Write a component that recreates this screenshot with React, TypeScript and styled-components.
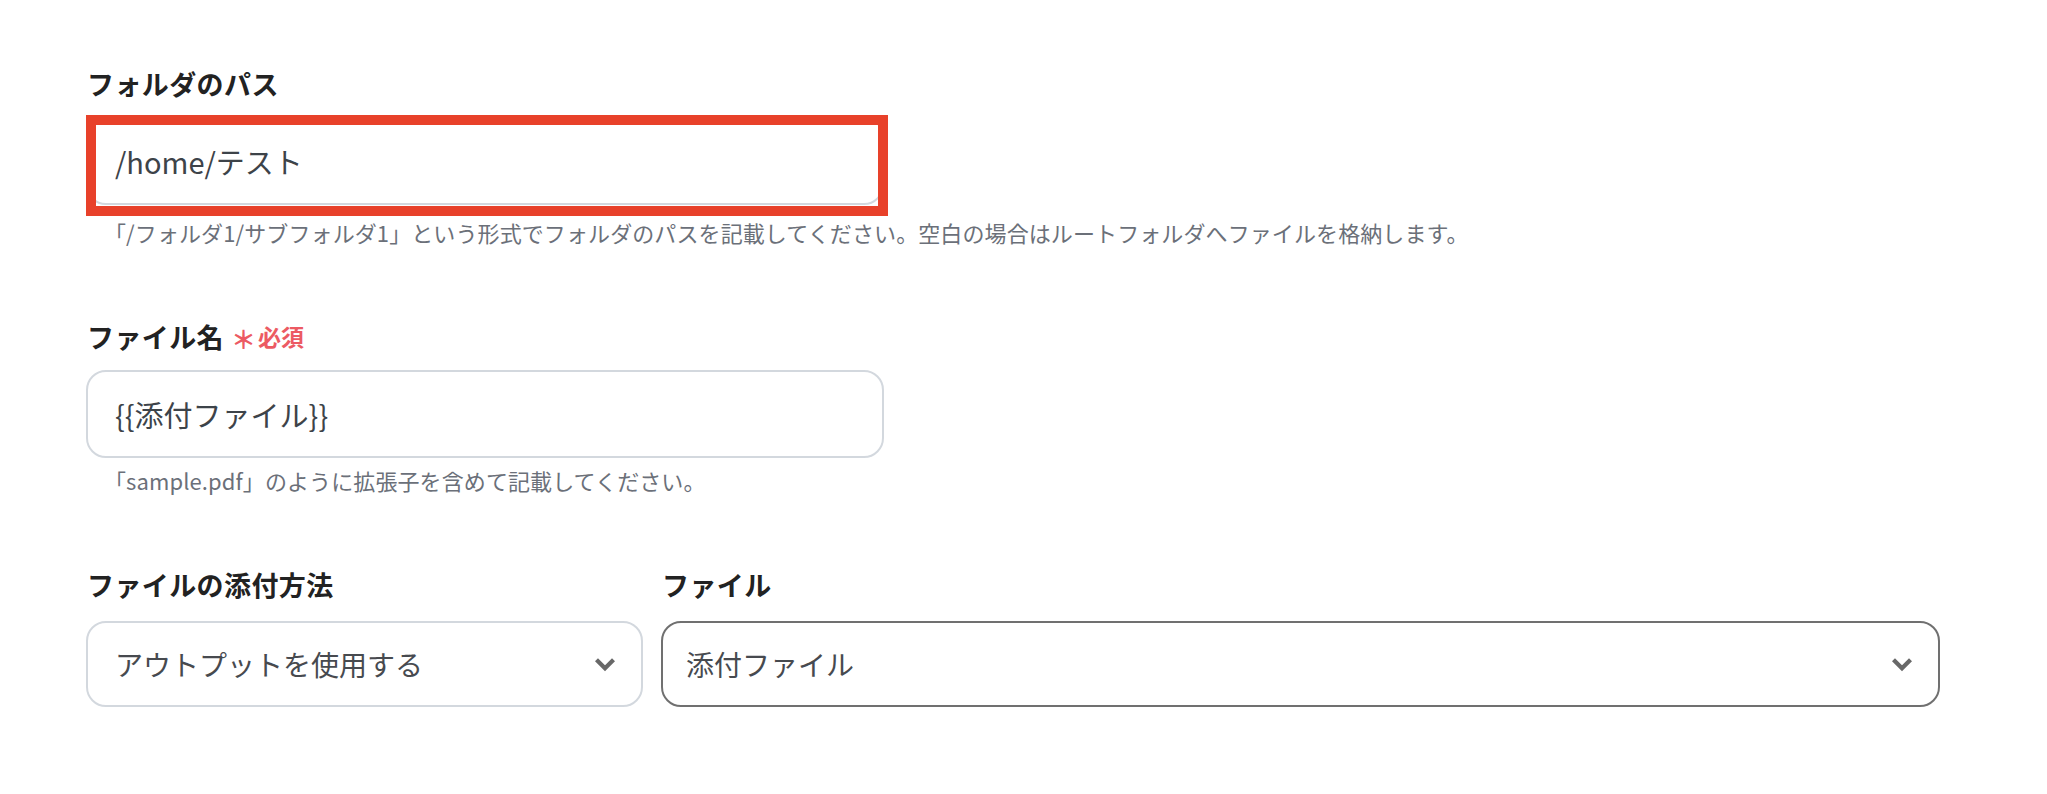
import React from "react";
import styled, { createGlobalStyle } from "styled-components";

const GlobalStyle = createGlobalStyle`
  html, body {
    margin: 0;
    padding: 0;
    background: #ffffff;
  }
  body {
    font-family: "Noto Sans CJK JP", "Noto Sans", "Liberation Sans", sans-serif;
    color: #222222;
  }
  * { box-sizing: border-box; }
`;

const Form = styled.div`
  display: flex;
  flex-direction: column;
  width: 1940px;
  padding: 63px 0 40px 86px;
`;

const Field = styled.div<{ $mt?: number }>`
  display: flex;
  flex-direction: column;
  margin-top: ${(p) => p.$mt ?? 0}px;
  min-width: 0;
`;

const Label = styled.div<{ $mb?: number }>`
  display: flex;
  align-items: center;
  gap: 7px;
  height: 40px;
  padding-left: 1px;
  margin-bottom: ${(p) => p.$mb ?? 14}px;
  font-size: 27px;
  font-weight: 700;
  letter-spacing: 0.4px;
  color: #222222;
  white-space: nowrap;
`;

const Required = styled.span`
  display: inline-flex;
  align-items: center;
  gap: 2px;
  font-size: 23px;
  font-weight: 700;
  letter-spacing: 0;
  color: #ec5a63;
`;

const Asterisk = styled.span`
  font-size: 25px;
  transform: translateY(2px);
`;

const Highlight = styled.div`
  position: relative;
  width: 798px;
  &::after {
    content: "";
    position: absolute;
    left: 0;
    right: -4px;
    top: -2px;
    bottom: -11px;
    border: 10px solid #e8412a;
    pointer-events: none;
  }
`;

const TextInput = styled.input`
  display: block;
  width: 798px;
  height: 88px;
  padding: 0 27px;
  border: 2px solid #d3d8de;
  border-radius: 20px;
  background: #ffffff;
  font-family: inherit;
  font-size: 29px;
  color: #3d4349;
  outline: none;
`;

const Help = styled.div<{ $mt?: number }>`
  margin-top: ${(p) => p.$mt ?? 8}px;
  padding-left: 18px;
  font-size: 22px;
  letter-spacing: 0.1px;
  line-height: 32px;
  color: #6b7079;
  white-space: nowrap;
`;

const Row = styled.div`
  display: grid;
  grid-template-columns: 557px 1279px;
  column-gap: 18px;
  margin-top: 68px;
`;

const SelectBox = styled.div<{ $active?: boolean }>`
  display: flex;
  align-items: center;
  justify-content: space-between;
  height: 86px;
  padding: 0 25px 0 ${(p) => (p.$active ? 23 : 27)}px;
  border: 2px solid ${(p) => (p.$active ? "#707070" : "#d3d8de")};
  border-radius: 20px;
  background: #ffffff;
  font-size: 28px;
  color: #474a4f;
`;

const Chevron = () => (
  <svg width="22" height="15" viewBox="0 0 22 15" aria-hidden="true">
    <path d="M2.5 2.8 L11 11.3 L19.5 2.8" fill="none" stroke="#686868" strokeWidth="4.2" />
  </svg>
);

export default function App() {
  return (
    <>
      <GlobalStyle />
      <Form>
        <Field>
          <Label>フォルダのパス</Label>
          <Highlight>
            <TextInput readOnly value="/home/テスト" />
          </Highlight>
          <Help $mt={11}>
            「/フォルダ1/サブフォルダ1」という形式でフォルダのパスを記載してください。空白の場合はルートフォルダへファイルを格納します。
          </Help>
        </Field>

        <Field $mt={68}>
          <Label>
            ファイル名
            <Required>
              <Asterisk>＊</Asterisk>必須
            </Required>
          </Label>
          <TextInput readOnly value="{{添付ファイル}}" />
          <Help $mt={6}>「sample.pdf」のように拡張子を含めて記載してください。</Help>
        </Field>

        <Row>
          <Field>
            <Label $mb={17}>ファイルの添付方法</Label>
            <SelectBox>
              <span>アウトプットを使用する</span>
              <Chevron />
            </SelectBox>
          </Field>
          <Field>
            <Label $mb={17}>ファイル</Label>
            <SelectBox $active>
              <span>添付ファイル</span>
              <Chevron />
            </SelectBox>
          </Field>
        </Row>
      </Form>
    </>
  );
}
